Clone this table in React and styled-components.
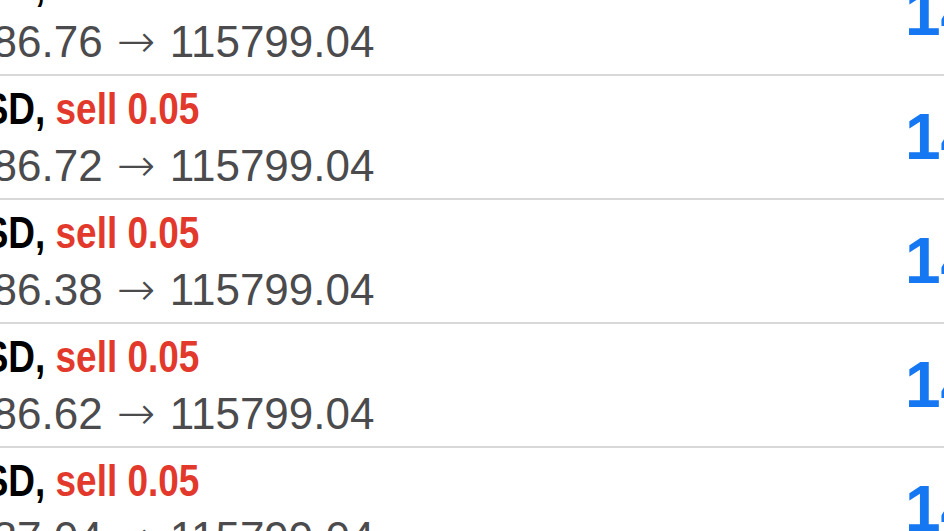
import React from "react";
import styled, { createGlobalStyle } from "styled-components";

const GlobalStyle = createGlobalStyle`
  html, body {
    margin: 0;
    padding: 0;
    background: #ffffff;
    overflow: hidden;
  }
  body {
    font-family: 'Liberation Sans', Arial, sans-serif;
  }
`;

const List = styled.div`
  margin-top: -48px;
  margin-left: -109px;
  width: 1200px;
`;

const Row = styled.div`
  display: flex;
  align-items: center;
  height: 122px;
  border-bottom: 2px solid #d8d8d8;
`;

const Info = styled.div`
  flex: none;
  width: 1014px;
  align-self: flex-start;
  padding-top: 4px;
`;

const Title = styled.div`
  font-size: 44px;
  line-height: 57px;
  font-weight: 700;
  color: #000;
  white-space: nowrap;
  transform: scaleX(0.84);
  transform-origin: left center;
  margin-left: -10px;
`;

const Side = styled.span`
  color: ${(p) => (p.$type === "sell" ? "#e2392c" : "#1677f2")};
`;

const Prices = styled.div`
  font-size: 44px;
  line-height: 57px;
  color: #4b4b4d;
  white-space: nowrap;
  padding-left: 7px;
`;

const Arrow = styled.span`
  font-family: 'DejaVu Sans', sans-serif;
  font-size: 46px;
  font-weight: 300;
  margin: 0 2px;
`;

const Value = styled.div`
  font-size: 64px;
  font-weight: 700;
  line-height: 1;
  color: #1677f2;
  white-space: nowrap;
`;

const deals = [
  { open: "115786.76", close: "115799.04" },
  { open: "115786.72", close: "115799.04" },
  { open: "115786.38", close: "115799.04" },
  { open: "115786.62", close: "115799.04" },
  { open: "115787.04", close: "115799.04" },
];

function App() {
  return (
    <>
      <GlobalStyle />
      <List>
        {deals.map((d, i) => (
          <Row key={i}>
            <Info>
              <Title>
                BTCUSD, <Side $type="sell">sell 0.05</Side>
              </Title>
              <Prices>
                {d.open} <Arrow>→</Arrow> {d.close}
              </Prices>
            </Info>
            <Value>14</Value>
          </Row>
        ))}
      </List>
    </>
  );
}

export default App;
